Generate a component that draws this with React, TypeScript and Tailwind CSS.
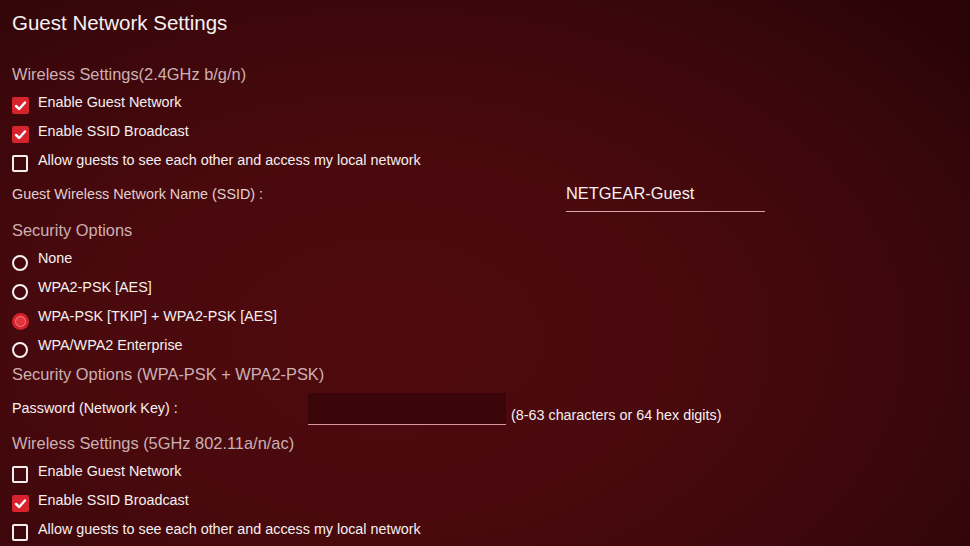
import React from "react";

function Check({ checked }: { checked: boolean }) {
  if (checked) {
    return (
      <span className="flex h-[17px] w-[17px] shrink-0 items-center justify-center rounded-[2px] bg-[#d7232d]">
        <svg width="13" height="13" viewBox="0 0 13 13" fill="none">
          <polyline points="2,7 5.2,10 11,3.5" stroke="#ffffff" strokeWidth="2.4" strokeLinecap="round" strokeLinejoin="round" />
        </svg>
      </span>
    );
  }
  return <span className="block h-[17px] w-[16px] shrink-0 rounded-[2px] border-2 border-[#f4eeee]" />;
}

function Radio({ selected }: { selected: boolean }) {
  if (selected) {
    return (
      <span className="flex h-[17px] w-[17px] shrink-0 items-center justify-center rounded-full bg-[#d2232c]">
        <span className="block h-[11px] w-[11px] rounded-full border-[1.5px] border-[#f0848a] bg-[#e2323b]" />
      </span>
    );
  }
  return <span className="block h-[16px] w-[16px] shrink-0 rounded-full border-2 border-[#f6f0f0]" />;
}

function CheckRow({ checked, label }: { checked: boolean; label: string }) {
  return (
    <div className="flex h-[29px] items-start">
      <div className="mt-[9px] w-[17px] shrink-0">
        <Check checked={checked} />
      </div>
      <span className="ml-[9px] text-[14.35px] leading-[29px] text-[#f6efef]">{label}</span>
    </div>
  );
}

function RadioRow({ selected, label }: { selected: boolean; label: string }) {
  return (
    <div className="flex h-[29px] items-start">
      <div className="mt-[11px] w-[17px] shrink-0">
        <Radio selected={selected} />
      </div>
      <span className="ml-[9px] text-[14.35px] leading-[29px] text-[#f6efef]">{label}</span>
    </div>
  );
}

function Heading({ children }: { children: React.ReactNode }) {
  return <div className="h-[28px] text-[16.4px] leading-[28px] text-[#cdb0b2]">{children}</div>;
}

export default function App() {
  return (
    <div
      className="h-[546px] w-[970px] overflow-hidden bg-[radial-gradient(ellipse_75%_85%_at_40%_62%,#4f0a0f_0%,#48090d_45%,#3b070b_75%,#2b0408_100%)] px-[12px] pt-[9px]"
      style={{ fontFamily: '"Liberation Sans", Arial, sans-serif' }}
    >
      <div className="h-[28px] text-[20.5px] leading-[28px] text-[#f7f1f1]">Guest Network Settings</div>

      <div className="mt-[23px]">
        <Heading>Wireless Settings(2.4GHz b/g/n)</Heading>
      </div>
      <CheckRow checked label="Enable Guest Network" />
      <CheckRow checked label="Enable SSID Broadcast" />
      <CheckRow checked={false} label="Allow guests to see each other and access my local network" />

      <div className="flex h-[41px] items-start">
        <span className="w-[554px] shrink-0 text-[14.35px] leading-[38px] text-[#e2cfd0]">
          Guest Wireless Network Name (SSID) :
        </span>
        <div className="flex h-[37px] w-[199px] items-center border-b-[1.5px] border-[#d9a3a7] pt-[1px] text-[16.4px] text-[#f7f1f1]">
          NETGEAR-Guest
        </div>
      </div>

      <Heading>Security Options</Heading>
      <RadioRow selected={false} label="None" />
      <RadioRow selected={false} label="WPA2-PSK [AES]" />
      <RadioRow selected label="WPA-PSK [TKIP] + WPA2-PSK [AES]" />
      <RadioRow selected={false} label="WPA/WPA2 Enterprise" />

      <Heading>Security Options (WPA-PSK + WPA2-PSK)</Heading>

      <div className="flex h-[41px] items-start">
        <span className="mt-[11px] w-[296px] shrink-0 text-[14.35px] leading-[18px] text-[#f6efef]">
          Password (Network Key) :
        </span>
        <div className="mt-[5px] h-[32px] w-[198px] shrink-0 border-b-[1.5px] border-[#d39a9f] bg-[#3b0609]" />
        <span className="ml-[5px] mt-[18px] text-[14.35px] leading-[18px] text-[#f6efef]">
          (8-63 characters or 64 hex digits)
        </span>
      </div>

      <Heading>Wireless Settings (5GHz 802.11a/n/ac)</Heading>
      <CheckRow checked={false} label="Enable Guest Network" />
      <CheckRow checked label="Enable SSID Broadcast" />
      <CheckRow checked={false} label="Allow guests to see each other and access my local network" />
    </div>
  );
}
